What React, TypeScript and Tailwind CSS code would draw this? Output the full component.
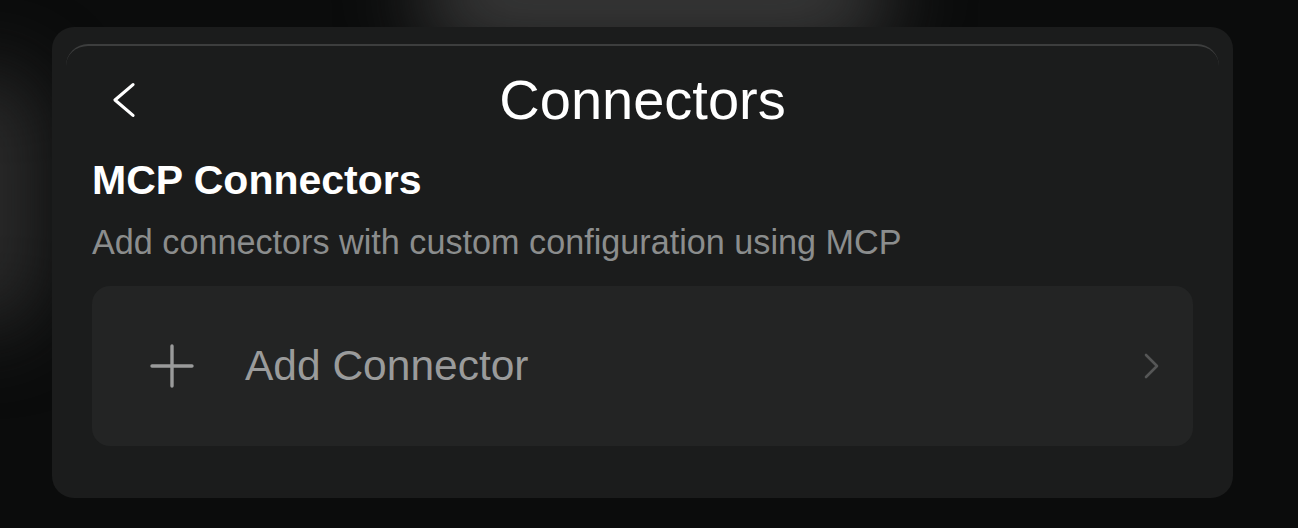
export default function App() {
  return (
    <div
      className="relative h-[528px] w-full overflow-hidden bg-[#0b0c0c]"
      style={{ fontFamily: '"Liberation Sans", Arial, sans-serif' }}
    >
      {/* blurred background glows */}
      <div className="absolute left-[420px] top-[-60px] h-[110px] w-[470px] rounded-full bg-[#3a3a3a] blur-2xl" />
      <div className="absolute left-[-70px] top-[70px] h-[260px] w-[110px] rounded-full bg-[#2c2c2c] blur-2xl" />

      <div className="relative ml-[52px] mt-[27px] flex h-[471px] w-[1181px] flex-col rounded-[22px] bg-[#1b1c1c]">
        {/* sheet */}
        <div className="mx-[14px] mt-[17px] flex-1 rounded-t-[22px] border-t-2 border-[#3d3e3e] px-[26px]">
          {/* header */}
          <div className="mt-[26px] grid grid-cols-[1fr_auto_1fr] items-center">
            <div className="pl-[16px]">
              <svg width="30" height="38" viewBox="0 0 30 38" fill="none">
                <path d="M25 3.6 L7 19 L25 34.4" stroke="white" strokeWidth="3.2" strokeLinecap="round" strokeLinejoin="round" />
              </svg>
            </div>
            <h1 className="text-[56px] leading-[56px] text-white">Connectors</h1>
            <div />
          </div>

          <h2 className="mt-[32px] text-[41px] font-bold leading-[41px] text-white">MCP Connectors</h2>
          <p className="mt-[24px] text-[34.2px] leading-[34px] text-[#8b8d8d]">
            Add connectors with custom configuration using MCP
          </p>

          {/* card */}
          <div className="mt-[27px] flex h-[160px] items-center rounded-[18px] bg-[#232424] pl-[58px] pr-[32px]">
            <svg width="44" height="44" viewBox="0 0 44 44" fill="none">
              <path d="M22 2 V42 M2 22 H42" stroke="#9a9b9b" strokeWidth="3.4" strokeLinecap="round" />
            </svg>
            <span className="ml-[51px] flex-1 text-[42.5px] leading-[42px] text-[#9a9b9b]">Add Connector</span>
            <svg width="18" height="28" viewBox="0 0 18 28" fill="none">
              <path d="M3 3 L14 14 L3 25" stroke="#555656" strokeWidth="2.6" strokeLinecap="round" strokeLinejoin="round" />
            </svg>
          </div>
        </div>
      </div>
    </div>
  )
}
